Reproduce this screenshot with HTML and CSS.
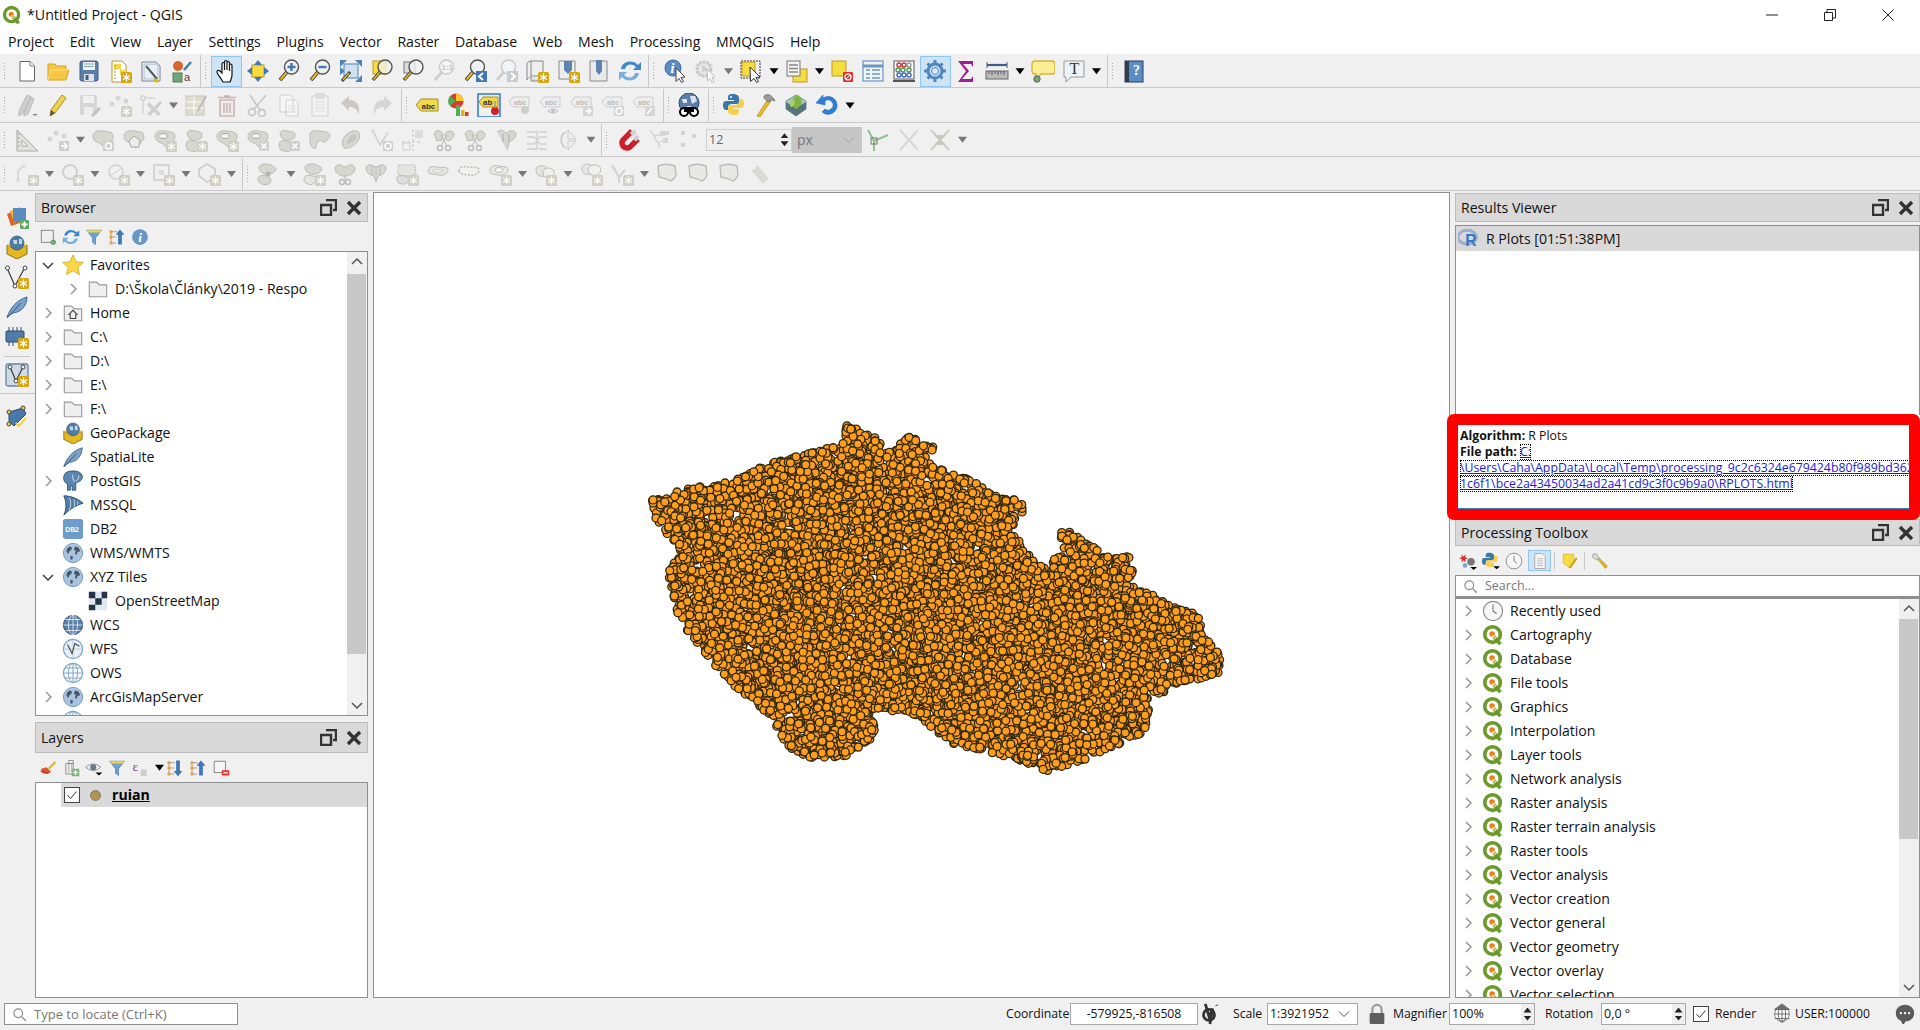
FILE: index.html
```html
<!DOCTYPE html>
<html lang="en">
<head>
<meta charset="utf-8">
<title>*Untitled Project - QGIS</title>
<link rel="stylesheet" href="styles.css">
</head>
<body>
<svg class="defs" width="0" height="0">
<defs>
<g id="st"><rect x="13" y="13" width="11" height="11" rx="1.5" fill="#d8a70f"/><path d="M18.5 14.5v8M15 16.5l7 4M22 16.5l-7 4" stroke="#fff" stroke-width="1.3"/></g>
<g id="gst"><rect x="13" y="13" width="11" height="11" rx="1.5" fill="#cfcfc4"/><path d="M18.5 14.5v8M15 16.5l7 4M22 16.5l-7 4" stroke="#fff" stroke-width="1.3"/></g>
<g id="gx"><rect x="13" y="13" width="10" height="10" rx="1.5" fill="#cfcfcf"/><path d="M15.5 15.5l5 5M20.5 15.5l-5 5" stroke="#fff" stroke-width="1.6"/></g>
<g id="lens"><path d="M10 13L3 21" stroke="#333" stroke-width="3.6"/><path d="M10 13L3.5 20.5" stroke="#eeba25" stroke-width="2"/><circle cx="14.5" cy="8" r="7" fill="#eef1f4" stroke="#555" stroke-width="1.4"/></g>
<g id="glens"><path d="M10 13L3 21" stroke="#cfcfcf" stroke-width="3"/><circle cx="14.5" cy="8" r="7" fill="#f4f4f4" stroke="#c8c8c8" stroke-width="1.4"/></g>
<path id="bl" d="M2 8c0-4 5-6 10-5s10 0 10 6c0 4-3 4-5 8s-4 3-6 0-9-2-9-9z"/>
</defs>
<symbol id="q" viewBox="0 0 24 24"><circle cx="11.5" cy="11.5" r="8.5" fill="#fff" stroke="#6a9a2c" stroke-width="4"/><path d="M13 14l7 8" stroke="#6a9a2c" stroke-width="4"/><circle cx="11" cy="11" r="3" fill="#ee7913"/><path d="M11 12l4 4" stroke="#f2d38a" stroke-width="2"/></symbol>
<symbol id="new" viewBox="0 0 24 24"><path d="M5 2.500h10l4.500 4.500v15H5z" fill="#fff" stroke="#666"/><path d="M15 2.500V7h4.500" fill="#eee" stroke="#888"/></symbol>
<symbol id="open" viewBox="0 0 24 24"><path d="M2 5h7l2 2h9v4h3l-3 10H2z" fill="#f5c644" stroke="#d6a725"/><path d="M2 21l3-10h18" fill="none" stroke="#fbe08f"/></symbol>
<symbol id="save" viewBox="0 0 24 24"><rect x="3" y="2" width="18" height="20" rx="2" fill="#5a7ea8" stroke="#3f5f85"/><rect x="6" y="3" width="12" height="8" fill="#f2f2f2"/><path d="M7 5h10M7 7.500h10" stroke="#8aa"/><rect x="7" y="15" width="10" height="7" fill="#dfe3e8"/><rect x="8.500" y="16" width="3" height="5" fill="#3f5f85"/></symbol>
<symbol id="saveas" viewBox="0 0 24 24"><path d="M4 2h10l4 4v17H4z" fill="#fff" stroke="#b9982c"/><path d="M6 5h7v6h4v5h-5V10H6z" fill="#f6d64a"/><path d="M7 6v14" stroke="#b9982c" stroke-dasharray="2 1"/><use href="#st"/></symbol>
<symbol id="layout" viewBox="0 0 24 24"><path d="M3 3h14l4 4v15H3z" fill="#fff" stroke="#6d7f93"/><rect x="5" y="5" width="14" height="15" fill="#e9eff5" stroke="#aeb9c5"/><path d="M7 7l11 13" stroke="#4b5a69" stroke-width="2"/><path d="M15 20l4 3" stroke="#e2b520" stroke-width="3"/></symbol>
<symbol id="style" viewBox="0 0 24 24"><circle cx="8" cy="7" r="5" fill="#d8662c"/><rect x="3" y="14" width="9" height="9" fill="#6fa67b" stroke="#4f8058"/><path d="M14 11L21 3" stroke="#4b7cae" stroke-width="2.600"/><text x="14" y="22" class="ic">a</text></symbol>
<symbol id="hand" viewBox="0 0 24 24"><path d="M8 23C6 19 2 15 2 13c0-2 2-2 3.500-.5L7 14V5c0-2 2.500-2 2.500 0v6V3c0-2 2.500-2 2.500 0v8V4c0-2 2.500-2 2.500 0v8V6.500c0-2 2.500-2 2.500 0V16c0 3-1 4-2 7z" fill="#fff" stroke="#111" stroke-width="1.2"/></symbol>
<symbol id="pan" viewBox="0 0 24 24"><rect x="6" y="6" width="12" height="12" fill="#f6dc3f" stroke="#b9982c"/><path d="M12 1l4 5H8zM12 23l4-5H8zM1 12l5-4v8zM23 12l-5-4v8z" fill="#3f78b5"/></symbol>
<symbol id="zin" viewBox="0 0 24 24"><use href="#lens"/><path d="M14.500 4v8M10.500 8h8" stroke="#3f78b5" stroke-width="2.400"/></symbol>
<symbol id="zout" viewBox="0 0 24 24"><use href="#lens"/><path d="M10.500 8h8" stroke="#3f78b5" stroke-width="2.400"/></symbol>
<symbol id="zfull" viewBox="0 0 24 24"><path d="M1 1h7L1 8zM23 1h-7l7 7zM23 23h-7l7-7zM1 16v-8l5 4z" fill="#4b83b8"/><rect x="5" y="5" width="14" height="14" fill="#cfe0ee" stroke="#4b83b8"/><path d="M11 13L3 22" stroke="#333" stroke-width="3"/><path d="M10 14L4 21" stroke="#eeba25" stroke-width="1.500"/></symbol>
<symbol id="zsel" viewBox="0 0 24 24"><rect x="3" y="2" width="13" height="13" fill="#f6dc3f" stroke="#b9982c"/><path d="M10 13L3 21" stroke="#333" stroke-width="3.400"/><path d="M10 13L3.500 20.500" stroke="#eeba25" stroke-width="1.800"/><circle cx="15" cy="8" r="7" fill="#f2f4ee" fill-opacity=".75" stroke="#555" stroke-width="1.400"/></symbol>
<symbol id="zlay" viewBox="0 0 24 24"><rect x="3" y="3" width="11" height="11" fill="#ddd" stroke="#777"/><path d="M10 13L3 21" stroke="#333" stroke-width="3.400"/><path d="M10 13L3.500 20.500" stroke="#eeba25" stroke-width="1.800"/><circle cx="15" cy="8" r="7" fill="#f2f4f2" fill-opacity=".75" stroke="#555" stroke-width="1.400"/></symbol>
<symbol id="z11" viewBox="0 0 24 24"><use href="#glens"/><text x="9.500" y="11" class="ig">1:1</text></symbol>
<symbol id="zlast" viewBox="0 0 24 24"><use href="#lens"/><rect x="13" y="12" width="11" height="11" fill="#3f78b5"/><path d="M20 14l-4 3.500 4 3.500" fill="none" stroke="#fff" stroke-width="2"/></symbol>
<symbol id="znext" viewBox="0 0 24 24"><use href="#glens"/><rect x="13" y="12" width="11" height="11" fill="#c7ccd1"/><path d="M17 14l4 3.500-4 3.500" fill="none" stroke="#fff" stroke-width="2"/></symbol>
<symbol id="mapn" viewBox="0 0 24 24"><path d="M6 2h12v15H6zM6 2C3 2 2 4 2 6v15c2-3 3-3 4-3" fill="#eee" stroke="#888"/><path d="M6 18v4h12" fill="#ddd" stroke="#888"/><use href="#st"/></symbol>
<symbol id="map3" viewBox="0 0 24 24"><path d="M3 2h16v18H3z" fill="#eee" stroke="#888"/><path d="M8 2h8v9l-4 4-4-4z" fill="#5b84b3"/><use href="#st"/></symbol>
<symbol id="bmk" viewBox="0 0 24 24"><path d="M3 2h17v20H3z" fill="#eaeaea" stroke="#888"/><path d="M9 1h6v11l-3 4-3-4z" fill="#5b84b3"/></symbol>
<symbol id="ref" viewBox="0 0 24 24"><path d="M3 10C4 2 15 0 20 6l3-3v8h-8l3-3C14 4 8 5 7 10z" fill="#3f88c9"/><path d="M21 14c-1 8-12 10-17 4l-3 3v-8h8l-3 3c4 4 10 3 11-2z" fill="#77afe0"/></symbol>
<symbol id="idn" viewBox="0 0 24 24"><circle cx="10" cy="9" r="8" fill="#5a8cc5" stroke="#3c6a9e"/><text x="7.500" y="14" class="ii">i</text><path d="M13 9l9 9-4 .5 2.500 4-2 1-2.500-4-3 3z" fill="#fff" stroke="#444"/></symbol>
<symbol id="act" viewBox="0 0 24 24"><circle cx="10" cy="10" r="7" fill="#e8e8e8" stroke="#c5c5c5" stroke-width="3" stroke-dasharray="2.500 1"/><path d="M8 6l6 4-6 4z" fill="#cfcfcf"/><path d="M13 10l8 8-3 .5 2 4-2 1-2-4-2.500 2.500z" fill="#fff" stroke="#bbb"/></symbol>
<symbol id="sel" viewBox="0 0 24 24"><rect x="2" y="2" width="19" height="17" fill="none" stroke="#333" stroke-dasharray="2 1"/><rect x="3" y="3" width="13" height="14" fill="#f6dc3f" stroke="#b9982c"/><path d="M11 8l10 10-4 .5 2.500 4-2 1-2.500-4-3.500 3z" fill="#fff" stroke="#333"/></symbol>
<symbol id="selby" viewBox="0 0 24 24"><rect x="8" y="10" width="14" height="13" fill="#f6dc3f" stroke="#b9982c"/><rect x="2" y="2" width="13" height="15" fill="#f2f2f2" stroke="#777"/><path d="M4 6h9M4 9.500h9M4 13h9" stroke="#888" stroke-width="1.600"/></symbol>
<symbol id="desel" viewBox="0 0 24 24"><rect x="2" y="2" width="14" height="15" fill="#f6dc3f" stroke="#b9982c"/><rect x="13" y="13" width="10" height="10" rx="1" fill="#e0352f"/><circle cx="18" cy="18" r="3" fill="none" stroke="#fff" stroke-width="1.200"/><path d="M16 20l4-4" stroke="#fff"/></symbol>
<symbol id="tbl" viewBox="0 0 24 24"><rect x="2" y="2" width="20" height="20" fill="#eef3f8" stroke="#6c96c0" stroke-width="1.200"/><path d="M2 7h20" stroke="#6c96c0" stroke-width="3"/><path d="M5 11h4M11 11h8M5 15h4M11 15h8M5 19h4M11 19h8" stroke="#6c96c0" stroke-width="1.300"/></symbol>
<symbol id="aba" viewBox="0 0 24 24"><rect x="2" y="2" width="20" height="18" fill="#fff" stroke="#555"/><path d="M1 22h22" stroke="#555" stroke-width="2"/><g fill="none" stroke-width="1.400"><circle cx="7" cy="6" r="2" stroke="#c33"/><circle cx="12" cy="6" r="2" stroke="#c33"/><circle cx="17" cy="6" r="2" stroke="#999"/><circle cx="6" cy="11" r="2" stroke="#4a9a4a"/><circle cx="11" cy="11" r="2" stroke="#4a9a4a"/><circle cx="17" cy="11" r="2" stroke="#4a9a4a"/><circle cx="7" cy="16" r="2" stroke="#46c"/><circle cx="12" cy="16" r="2" stroke="#46c"/><circle cx="17" cy="16" r="2" stroke="#46c"/></g></symbol>
<symbol id="gear" viewBox="0 0 24 24"><circle cx="12" cy="12" r="7" fill="none" stroke="#4f86c0" stroke-width="3"/><path d="M12 1v5M12 18v5M1 12h5M18 12h5M4.500 4.500l3.500 3.500M16 16l3.500 3.500M19.500 4.500L16 8M8 16l-3.500 3.500" stroke="#4f86c0" stroke-width="3"/><circle cx="12" cy="12" r="3.500" fill="#dbe9f6" stroke="#4f86c0"/></symbol>
<symbol id="sig" viewBox="0 0 24 24"><path d="M4 2h15v6l-2-3H9l6 7-7 8h9l2-3v6H4l8-11z" fill="#a01c95"/></symbol>
<symbol id="rul" viewBox="0 0 24 24"><path d="M2 6h20" stroke="#3f5f85" stroke-width="2.200"/><path d="M2 3v6M22 3v6" stroke="#3f5f85"/><rect x="1" y="12" width="22" height="8" fill="#bbb" stroke="#666"/><path d="M4 12v3M7 12v4M10 12v3M13 12v4M16 12v3M19 12v4" stroke="#555"/></symbol>
<symbol id="tip" viewBox="0 0 24 24"><path d="M4 2h17q3 0 3 3v7q0 3-3 3H10l-5 5v-5H4q-3 0-3-3V5q0-3 3-3z" fill="#fbee94" stroke="#d8b03e" stroke-width="1.400"/><circle cx="6" cy="20" r="3.200" fill="#79a56b" stroke="#567"/></symbol>
<symbol id="txt" viewBox="0 0 24 24"><path d="M2 2h20v16H9l-5 5v-5H2z" fill="#eef3f6" stroke="#999"/><text x="7.500" y="15" class="it">T</text></symbol>
<symbol id="hlp" viewBox="0 0 24 24"><rect x="4" y="2" width="18" height="21" fill="#5c8dc2" stroke="#2c3e50"/><rect x="4" y="2" width="4" height="21" fill="#2c3e50"/><text x="12" y="16" class="iq">?</text></symbol>
<symbol id="gpens" viewBox="0 0 24 24"><path d="M4 18L12 2l4 2-8 16-4 3zM9 20L16 4l3 2-6 15-4 2z" fill="#cfcfcf" stroke="#b9b9b9"/><path d="M17 21h6l-3 2z" fill="#888"/></symbol>
<symbol id="pen" viewBox="0 0 24 24"><path d="M16 2l4 3L9 20l-5 3 1-6z" fill="#f3d14a" stroke="#a58f26"/><path d="M4 23l1-6 4 3z" fill="#555"/></symbol>
<symbol id="gsave" viewBox="0 0 24 24"><rect x="3" y="2" width="17" height="20" rx="2" fill="#d6d6d6"/><rect x="6" y="3" width="11" height="7" fill="#f1f1f1"/><rect x="7" y="14" width="9" height="8" fill="#eee"/><path d="M14 22l8-8 2 2-8 8z" fill="#c0c0c0"/></symbol>
<symbol id="gpts" viewBox="0 0 24 24"><g fill="#d5d5d5"><circle cx="4" cy="11" r="2.500"/><circle cx="10" cy="5" r="2.500"/><circle cx="18" cy="8" r="2.500"/></g><use href="#gst"/></symbol>
<symbol id="gmod" viewBox="0 0 24 24"><rect x="2" y="3" width="4" height="4" fill="none" stroke="#c8c8c8"/><path d="M6 5h10M4 7v14" stroke="#c8c8c8"/><path d="M8 21L21 8l2 2-12 13zM10 9l12 12-3 2L8 12z" fill="#cfcfcf"/></symbol>
<symbol id="gedit" viewBox="0 0 24 24"><rect x="2" y="3" width="18" height="19" fill="#ddddcf" stroke="#c8c8b8"/><path d="M2 9h18M2 15h18M10 3v19" stroke="#fff"/><path d="M13 17L21 2l2 2-9 15z" fill="#bfbfbf"/></symbol>
<symbol id="gtrash" viewBox="0 0 24 24"><path d="M5 7h14v16H5z" fill="#f2eded" stroke="#c9b5b5" stroke-width="1.600"/><path d="M3 4.500h18M9 3h6M9 10v10M12 10v10M15 10v10" stroke="#c9b5b5" stroke-width="1.600"/></symbol>
<symbol id="gcut" viewBox="0 0 24 24"><circle cx="6" cy="19" r="3.500" fill="none" stroke="#c8c8c8" stroke-width="1.800"/><circle cx="16" cy="20" r="3.500" fill="none" stroke="#c8c8c8" stroke-width="1.800"/><path d="M8 16L20 2M14 17L4 2" stroke="#c8c8c8" stroke-width="1.600"/></symbol>
<symbol id="gcopy" viewBox="0 0 24 24"><path d="M3 2h10l3 3v14H3zM9 7h9l3 3v13H9z" fill="#f6f6f6" stroke="#cfcfcf"/><path d="M11 13h8M11 16h8M11 19h8" stroke="#ddd"/></symbol>
<symbol id="gpaste" viewBox="0 0 24 24"><rect x="4" y="3" width="16" height="20" fill="#f2f2f2" stroke="#cfcfcf"/><rect x="8" y="1" width="8" height="4" fill="#ddd" stroke="#cfcfcf"/><path d="M7 9h10M7 12h10M7 15h10M7 18h10" stroke="#ddd"/></symbol>
<symbol id="gund" viewBox="0 0 24 24"><path d="M2 10l8-7v4c8 0 11 5 10 15-2-6-4-8-10-8v4z" fill="#cdc8c3"/></symbol>
<symbol id="gred" viewBox="0 0 24 24"><path d="M22 10l-8-7v4C6 7 3 12 4 22c2-6 4-8 10-8v4z" fill="#d5d5d5"/></symbol>
<symbol id="labc" viewBox="0 0 24 24"><path d="M1 12l5-6h17v12H6z" fill="#f2d94b" stroke="#a58f26"/><text x="6.500" y="15.500" class="il">abc</text></symbol>
<symbol id="chart" viewBox="0 0 24 24"><circle cx="10" cy="8" r="7.500" fill="#d93a32"/><path d="M10 8V.500A7.500 7.500 0 0 1 17.500 8z" fill="#f6c92e"/><path d="M10 8l-6 5A7.500 7.500 0 0 1 4 3z" fill="#4caf50"/><rect x="10" y="12" width="4" height="11" fill="#4caf50"/><rect x="15" y="17" width="3.500" height="6" fill="#e3af16"/><rect x="19" y="19" width="3.500" height="4" fill="#d93a32"/></symbol>
<symbol id="labp" viewBox="0 0 24 24"><rect x="1" y="1" width="22" height="23" fill="none" stroke="#1f6fd1" stroke-width="1.400"/><path d="M2 9l4-5h15v10H6z" fill="#f2d94b" stroke="#a58f26"/><text x="6" y="12" class="il">ab</text><circle cx="18" cy="18" r="4" fill="#c8242c"/><path d="M18 8v7" stroke="#999" stroke-width="1.500"/></symbol>
<symbol id="gl1" viewBox="0 0 24 24"><path d="M1 9l4-5h16v10H5z" fill="#eee" stroke="#ccc"/><text x="6" y="12" class="ig2">abc</text><circle cx="17" cy="17" r="4" fill="#cfcfcf"/></symbol>
<symbol id="gl2" viewBox="0 0 24 24"><path d="M1 9l4-5h16v10H5z" fill="#eee" stroke="#ccc"/><text x="6" y="12" class="ig2">abc</text><path d="M9 18q5-4 10 0-5 4-10 0z" fill="none" stroke="#bbb"/><circle cx="14" cy="18" r="1.800" fill="#bbb"/></symbol>
<symbol id="gl3" viewBox="0 0 24 24"><path d="M1 9l4-5h16v10H5z" fill="#eee" stroke="#ccc"/><text x="6" y="12" class="ig2">abc</text><rect x="13" y="13" width="10" height="10" fill="#d5d5d5"/><path d="M15 18h6M18 15l3 3-3 3" stroke="#fff" fill="none" stroke-width="1.500"/></symbol>
<symbol id="gl4" viewBox="0 0 24 24"><path d="M1 9l4-5h16v10H5z" fill="#eee" stroke="#ccc"/><text x="6" y="12" class="ig2">abc</text><rect x="13" y="13" width="10" height="10" fill="#d5d5d5"/><circle cx="18" cy="18" r="3" fill="none" stroke="#fff" stroke-width="1.500"/></symbol>
<symbol id="gl5" viewBox="0 0 24 24"><path d="M1 9l4-5h16v10H5z" fill="#eee" stroke="#ccc"/><text x="6" y="12" class="ig2">abc</text><rect x="13" y="13" width="10" height="10" fill="#d5d5d5"/><path d="M15 21l5-6" stroke="#fff" stroke-width="1.500"/></symbol>
<symbol id="earth" viewBox="0 0 24 24"><circle cx="12" cy="10" r="10" fill="#5a7fa8" stroke="#2e4a68"/><path d="M5 6h5v4H6zM13 3h5l2 5-5 3zM10 13h4v5h-3z" fill="#dbe5ef"/><circle cx="7" cy="19" r="4" fill="#fff" stroke="#000" stroke-width="2"/><circle cx="17" cy="19" r="4" fill="#fff" stroke="#000" stroke-width="2"/><path d="M7 14h10v5H7z" fill="#000"/></symbol>
<symbol id="py" viewBox="0 0 24 24"><path d="M11 1c-5 0-5 2-5 4v2h6v1H4c-3 0-3 3-3 5s1 4 3 4h2v-3c0-2 2-3 4-3h5c1 0 2-1 2-2V5c0-2-2-4-6-4z" fill="#3b78aa"/><path d="M12 22c5 0 5-2 5-4v-2h-6v-1h8c3 0 3-3 3-5s-1-4-3-4h-2v3c0 2-2 3-4 3H8c-1 0-2 1-2 2v4c0 2 2 4 6 4z" fill="#f6d04d"/><circle cx="9" cy="4" r="1" fill="#fff"/></symbol>
<symbol id="ham" viewBox="0 0 24 24"><path d="M4 23l11-17 3 2L7 24z" fill="#e9b923" stroke="#a38319" stroke-width=".600"/><path d="M11 3c4-3 8-1 11 5l-3-1-4 2-4-4z" fill="#9a9a9a" stroke="#555" stroke-width=".600"/></symbol>
<symbol id="plg" viewBox="0 0 24 24"><path d="M12 2l10 6v8l-10 7-10-7V8z" fill="#a8c7c7" stroke="#78989b"/><path d="M12 15L2 9v7l10 7 10-7V9z" fill="#56747a"/><path d="M12 16C5 12 5 7 14 2c5 5 5 10-2 14z" fill="#7cb342"/><path d="M7 14C4 10 6 7 10 6c1 4 1 7-3 8z" fill="#a8d06a"/></symbol>
<symbol id="undb" viewBox="0 0 24 24"><path d="M8 5a9 9 0 1 1-1 14l3-3a5 5 0 1 0 0-8v4L1 10l7-8z" fill="#2d7fd3" stroke="#1c63ad" stroke-width=".500"/></symbol>
<symbol id="grul" viewBox="0 0 24 24"><path d="M2 2v21h21z" fill="#e2e2da" stroke="#aaa"/><path d="M7 12v6h6z" fill="#efefef" stroke="#aaa"/><path d="M2 6h3M2 10h3M2 14h3M2 18h3" stroke="#aaa"/></symbol>
<symbol id="gpt2" viewBox="0 0 24 24"><g fill="#d5d5d5"><circle cx="4" cy="11" r="2.500"/><circle cx="10" cy="5" r="2.500"/><circle cx="18" cy="8" r="2.500"/></g><rect x="13" y="13" width="10" height="10" fill="#cfcfcf"/><path d="M15 18h6M18 15l3 3-3 3" stroke="#fff" fill="none" stroke-width="1.500"/></symbol>
<symbol id="gb" viewBox="0 0 24 24"><use href="#bl" fill="#d7d7d2" stroke="#bcbcb6"/></symbol>
<symbol id="gbr" viewBox="0 0 24 24"><use href="#bl" fill="#d7d7d2" stroke="#bcbcb6"/><rect x="12" y="13" width="11" height="10" fill="#cfcfcf"/><circle cx="17.500" cy="18" r="3" fill="none" stroke="#fff" stroke-width="1.500"/></symbol>
<symbol id="ghex" viewBox="0 0 24 24"><use href="#bl" fill="#d7d7d2" stroke="#bcbcb6"/><path d="M12 8l6 4-1 7H9l-2-6z" fill="#ececec" stroke="#aaa"/></symbol>
<symbol id="gring" viewBox="0 0 24 24"><use href="#bl" fill="#d7d7d2" stroke="#bcbcb6"/><ellipse cx="10" cy="8" rx="4.500" ry="2.500" fill="#f0f0f0" stroke="#aaa"/><use href="#gst"/></symbol>
<symbol id="gtw" viewBox="0 0 24 24"><path d="M3 6c0-4 5-4 8-3s7 0 7 4-3 4-5 5-8 1-10-6zM2 17c0-5 5-5 8-4s8 4 5 8-5 2-8 2-5-2-5-6z" fill="#d7d7d2" stroke="#bcbcb6"/><use href="#gst"/></symbol>
<symbol id="grx" viewBox="0 0 24 24"><use href="#bl" fill="#d7d7d2" stroke="#bcbcb6"/><ellipse cx="10" cy="8" rx="4.500" ry="2.500" fill="#f0f0f0" stroke="#aaa"/><use href="#gx"/></symbol>
<symbol id="gtx" viewBox="0 0 24 24"><path d="M3 6c0-4 5-4 8-3s7 0 7 4-3 4-5 5-8 1-10-6zM2 17c0-5 5-5 8-4s8 4 5 8-5 2-8 2-5-2-5-6z" fill="#d7d7d2" stroke="#bcbcb6"/><use href="#gx"/></symbol>
<symbol id="gb2" viewBox="0 0 24 24"><path d="M2 6c0-3 6-4 10-3s10 0 10 5c0 3-3 3-4 5s-2 2-4 0-6 2-6 6c0 2-3 2-4 0-3-4-2-9-2-13z" fill="#d7d7d2" stroke="#bcbcb6"/></symbol>
<symbol id="goff" viewBox="0 0 24 24"><path d="M4 18C1 12 8 4 14 3c6-1 8 3 6 8s-7 8-11 9-4 0-5-2z" fill="#d7d7d2" stroke="#bcbcb6"/><path d="M8 15c-1-3 3-7 6-8 4-1 4 3 2 5s-7 5-8 3z" fill="#c5c5c0"/></symbol>
<symbol id="gvr" viewBox="0 0 24 24"><path d="M3 3l7 14 7-11" fill="none" stroke="#cfcfcf" stroke-width="1.500"/><circle cx="3" cy="3" r="2" fill="#ddd"/><circle cx="17" cy="6" r="2" fill="#ddd"/><rect x="13" y="13" width="10" height="10" fill="#cfcfcf"/><circle cx="18" cy="18" r="3" fill="none" stroke="#fff" stroke-width="1.500"/></symbol>
<symbol id="gsp" viewBox="0 0 24 24"><path d="M12 1v22M1 14h20" stroke="#cfcfcf" stroke-dasharray="3 2" stroke-width="1.500"/><rect x="14" y="2" width="8" height="8" fill="#ddd"/><rect x="2" y="15" width="7" height="7" fill="none" stroke="#cfcfcf"/></symbol>
<symbol id="gsc" viewBox="0 0 24 24"><path d="M2 6c2-5 7-4 9 0l-1 6-5 1zM13 6c2-4 8-4 9 0 0 4-3 6-6 7l-3-3z" fill="#d7d7d2" stroke="#bcbcb6"/><circle cx="8" cy="20" r="2.500" fill="none" stroke="#bbb" stroke-width="1.500"/><circle cx="16" cy="20" r="2.500" fill="none" stroke="#bbb" stroke-width="1.500"/><path d="M9 18l6-11M15 18L9 7" stroke="#bbb"/></symbol>
<symbol id="gsl" viewBox="0 0 24 24"><path d="M3 4c3-3 7-2 8 1l2 0c2-3 7-3 9 0 0 5-3 7-7 9l-2 8" fill="#d7d7d2" stroke="#bcbcb6"/><path d="M9 6v8M15 6v8" stroke="#aaa"/></symbol>
<symbol id="gcr" viewBox="0 0 24 24"><path d="M2 4h10M14 4h8M2 9h7l3 3 3-3h7M2 16h7l3-3 3 3h7M2 21h10M14 21h8M12 2v20" stroke="#cfcfcf" stroke-width="1.300" fill="none"/></symbol>
<symbol id="grot" viewBox="0 0 24 24"><path d="M12 2l8 9-8 0zM12 22l8-9h-8z" fill="#eee" stroke="#c8c8c8"/><path d="M10 4a9 9 0 0 0 0 16" fill="none" stroke="#c8c8c8" stroke-width="1.500"/></symbol>
<symbol id="mag" viewBox="0 0 24 24"><path d="M16 3L7 12a5 5 0 0 0 7 7l8-8" fill="none" stroke="#cc1f29" stroke-width="5.500"/><path d="M16 3l2.500 3.500M22 11l-3.500-2" stroke="#d0d0d0" stroke-width="5.500"/></symbol>
<symbol id="gsn" viewBox="0 0 24 24"><g fill="none" stroke="#d0d0d0" stroke-width="1.300"><path d="M3 2l4 6 4 7 2 5M7 8l8-2M11 15l7-3"/></g><g fill="#d5d5d5"><rect x="13" y="3" width="5" height="5"/><rect x="18" y="3" width="4" height="4"/><rect x="16" y="10" width="5" height="5"/></g></symbol>
<symbol id="gsn2" viewBox="0 0 24 24"><g fill="#d5d5d5"><rect x="3" y="3" width="4" height="4"/><rect x="14" y="6" width="4" height="4"/><rect x="3" y="15" width="4" height="4"/></g></symbol>
<symbol id="trim" viewBox="0 0 24 24"><path d="M8 13L2 2M8 13l14-6M8 13v10" stroke="#8cc68c" stroke-width="2"/><rect x="5" y="10" width="6" height="6" fill="none" stroke="#777"/></symbol>
<symbol id="gcross" viewBox="0 0 24 24"><path d="M3 2l18 20M21 2L3 22" stroke="#d8d8d8" stroke-width="2"/></symbol>
<symbol id="gcross2" viewBox="0 0 24 24"><path d="M3 2l18 20M21 2L3 22" stroke="#cfcfc6" stroke-width="2"/><path d="M6 7l12 0-5 5 5 5H6l5-5z" fill="#c8c8be"/></symbol>
<symbol id="gv1" viewBox="0 0 24 24"><path d="M3 18V9l6-6" fill="none" stroke="#d0d0d0" stroke-width="1.500"/><circle cx="3" cy="18" r="2" fill="#ddd"/><circle cx="9" cy="4" r="2" fill="#ddd"/><use href="#gst"/></symbol>
<symbol id="gv2" viewBox="0 0 24 24"><circle cx="10" cy="10" r="7" fill="none" stroke="#d0d0d0" stroke-width="2"/><use href="#gst"/></symbol>
<symbol id="gv3" viewBox="0 0 24 24"><circle cx="10" cy="10" r="7" fill="none" stroke="#d0d0d0" stroke-width="1.400"/><path d="M4 14l12-8" stroke="#d0d0d0"/><use href="#gst"/></symbol>
<symbol id="gv4" viewBox="0 0 24 24"><rect x="3" y="3" width="15" height="15" fill="none" stroke="#cfcfcf" stroke-width="1.600"/><rect x="8" y="8" width="5" height="5" fill="#ddd"/><use href="#gst"/></symbol>
<symbol id="gv5" viewBox="0 0 24 24"><path d="M10 2l8 5v9l-8 4-8-6V7z" fill="none" stroke="#cfcfcf" stroke-width="1.800"/><use href="#gst"/></symbol>
<symbol id="gm1" viewBox="0 0 24 24"><path d="M3 5c1-3 8-4 12-2s6 3 4 6-4 2-6 3-10 0-10-7z" fill="#d7d7d2" stroke="#bcbcb6"/><path d="M2 17c0-4 5-4 9-3s5 5 3 7-6 2-8 1-4-2-4-5z" fill="#d7d7d2" stroke="#bcbcb6"/><circle cx="12" cy="12" r="2.500" fill="#b5b5b0"/></symbol>
<symbol id="gm2" viewBox="0 0 24 24"><path d="M3 5c1-3 8-4 12-2s6 3 4 6-4 2-6 3-10 0-10-7z" fill="#d7d7d2" stroke="#bcbcb6"/><path d="M2 17c0-4 5-4 9-3s3 5 1 7-3 2-6 1-4-2-4-5z" fill="#e4e4e0" stroke="#bcbcb6"/><use href="#gst"/></symbol>
<symbol id="gm3" viewBox="0 0 24 24"><path d="M2 6c1-4 6-4 9-1h2c3-3 8-3 9 1 0 5-4 7-8 8h-4C6 13 2 11 2 6z" fill="#d7d7d2" stroke="#bcbcb6"/><path d="M12 13v8" stroke="#bbb"/><circle cx="9" cy="20" r="2.500" fill="none" stroke="#bbb" stroke-width="1.400"/><circle cx="15" cy="20" r="2.500" fill="none" stroke="#bbb" stroke-width="1.400"/></symbol>
<symbol id="gm4" viewBox="0 0 24 24"><path d="M2 6c1-4 6-4 9-1h2c3-3 8-3 9 1 0 5-4 7-8 8l-2 6-2-6C6 13 2 11 2 6z" fill="#d7d7d2" stroke="#bcbcb6"/><path d="M8 4v9M12 4v9M16 4v9" stroke="#bbb"/></symbol>
<symbol id="gm5" viewBox="0 0 24 24"><path d="M3 3h17l1 9-8 2-10-1z" fill="#e4e4e0" stroke="#bcbcb6" stroke-dasharray="2 1"/><path d="M2 15c3-2 9-2 11 1s-1 6-4 6-8 0-7-7z" fill="#ddd" stroke="#bcbcb6"/><use href="#gst"/></symbol>
<symbol id="gm6" viewBox="0 0 24 24"><path d="M2 9c0-4 5-5 9-4s11-1 11 3-6 6-10 5-10 0-10-4z" fill="#e4e4e0" stroke="#bcbcb6"/><path d="M6 9c2-2 4-1 8-1s4 1 2 2-8 1-10-1z" fill="#f1f1f1" stroke="#ccc"/></symbol>
<symbol id="gm7" viewBox="0 0 24 24"><path d="M2 9c0-4 5-5 9-4s11-1 11 3-6 6-10 5-10 0-10-4z" fill="none" stroke="#bcbcb6" stroke-dasharray="2 1.500" stroke-width="1.500"/></symbol>
<symbol id="gm8" viewBox="0 0 24 24"><path d="M2 8c0-4 5-5 9-4s9 0 9 4-6 6-10 5-8 0-8-5z" fill="#e8e8e4" stroke="#bcbcb6"/><ellipse cx="11" cy="8" rx="4" ry="2.500" fill="#f8f8f8" stroke="#bbb"/><use href="#gst"/></symbol>
<symbol id="gm9" viewBox="0 0 24 24"><path d="M3 8c0-5 8-5 10-3s5 8 0 9-10 0-10-6z" fill="#e4e4e0" stroke="#bcbcb6"/><path d="M10 10c0-4 6-5 9-3s3 7-1 8-8 1-8-5z" fill="#f0f0ee" stroke="#bcbcb6"/><use href="#gst"/></symbol>
<symbol id="gm10" viewBox="0 0 24 24"><path d="M3 6c0-4 6-5 9-3s3 8-1 9-8 0-8-6z" fill="#e4e8ea" stroke="#bcbcb6"/><path d="M9 7c0-4 8-5 11-3s2 8-2 9-9 0-9-6z" fill="#f0f0ee" stroke="#bcbcb6"/><use href="#gst"/></symbol>
<symbol id="gm11" viewBox="0 0 24 24"><path d="M2 3l7 12 6-7M9 15v6" fill="none" stroke="#d0d0d0" stroke-width="2"/><use href="#gst"/></symbol>
<symbol id="gc1" viewBox="0 0 24 24"><path d="M3 4c5-2 12-2 17 0l1 9c-1 3-3 5-5 6-5-3-8-3-12-4z" fill="#e8e8e4" stroke="#bcbcb6" stroke-width="1.400"/></symbol>
<symbol id="gmv" viewBox="0 0 24 24"><path d="M10 3l11 14-6 5L4 9z" fill="#d8d8d0"/><path d="M7 6l11 14M10 4l11 14" stroke="#efefef" stroke-dasharray="2 2"/></symbol>
<symbol id="f" viewBox="0 0 24 24"><path d="M2.500 4.500h8l3 3h8v13h-19z" fill="#efefef" stroke="#9a9a9a" stroke-width="1.200"/></symbol>
<symbol id="fh" viewBox="0 0 24 24"><path d="M2.500 4.500h8l3 3h8v13h-19z" fill="#efefef" stroke="#9a9a9a" stroke-width="1.200"/><path d="M7 14l5-5 5 5M9 13v5h6v-5" fill="none" stroke="#444" stroke-width="1.200"/></symbol>
<symbol id="star" viewBox="0 0 24 24"><path d="M12 1l3.300 7.500 8 .7-6 5.300 1.800 8L12 18.300 4.900 22.500l1.800-8-6-5.300 8-.7z" fill="#f8d84a" stroke="#d8b024"/></symbol>
<symbol id="gpk" viewBox="0 0 24 24"><path d="M2 10l10 5 10-5v9l-10 5-10-5z" fill="#e6b820" stroke="#8a7120"/><path d="M2 10l10-5 10 5-10 5z" fill="#f2d04c"/><circle cx="12" cy="8" r="7" fill="#4d7da8" stroke="#2e4a68" stroke-width=".600"/><path d="M8 5h4v4H9zM14 4h3v5h-3z" fill="#c6d6e3"/></symbol>
<symbol id="sl" viewBox="0 0 24 24"><path d="M2 22C6 12 12 5 22 2c0 8-5 15-14 16z" fill="#7da1c7" stroke="#3f6a96"/><path d="M2 23L16 8" stroke="#2f5a86"/></symbol>
<symbol id="pg" viewBox="0 0 24 24"><path d="M4 3c5-3 16-3 18 3 1 5-3 7-5 7l-2 2v7h-4v-5H9v5H6v-7C2 14 0 8 4 3z" fill="#5b86b2" stroke="#2e5478"/><path d="M12 5c-1 3 0 6 2 8M18 6c1 2 0 5-3 6" stroke="#dfe9f2" fill="none"/></symbol>
<symbol id="ms" viewBox="0 0 24 24"><path d="M2 2c6 0 14 2 21 8-6 2-13 5-21 13 3-7 3-14 0-21z" fill="#4f7ea8" stroke="#2c506f"/><path d="M8 4c2 4 2 9 0 14M13 6c1 3 1 5 0 9M17 8c.500 1 .500 2 0 4" stroke="#cfdde8" fill="none"/></symbol>
<symbol id="db2" viewBox="0 0 24 24"><rect x="1" y="1" width="22" height="22" rx="3" fill="#6d9bcc"/><text x="3.500" y="15" class="id">DB2</text></symbol>
<symbol id="globe" viewBox="0 0 24 24"><circle cx="12" cy="12" r="10.500" fill="#a9c4df" stroke="#6f93b8"/><path d="M5 8l3-3 3 1-1 3-2 1-1 3-2-2zM14 5l4 1 2 4-3 1-1 3-2-1 1-3-2-2zM9 15l3 1-1 4-2-2z" fill="#46586a"/></symbol>
<symbol id="wcs" viewBox="0 0 24 24"><circle cx="12" cy="12" r="10.500" fill="#5a7fa8" stroke="#2e4a68"/><path d="M1.500 12h21M4 6h16M4 18h16M12 1.500v21" stroke="#dbe5ef"/><ellipse cx="12" cy="12" rx="5" ry="10.500" fill="none" stroke="#dbe5ef"/></symbol>
<symbol id="wfs" viewBox="0 0 24 24"><circle cx="12" cy="12" r="10.500" fill="#e6eff7" stroke="#7ba0c5" stroke-width="1.300"/><path d="M2 12h20M12 2v20" stroke="#b8cee3"/><path d="M6 7l5 10 3-11 5 3" fill="none" stroke="#444" stroke-width="1.200"/></symbol>
<symbol id="ows" viewBox="0 0 24 24"><circle cx="12" cy="12" r="10.500" fill="#fafcfe" stroke="#7ba0c5" stroke-width="1.300"/><path d="M1.500 12h21M3.500 6.500h17M3.500 17.500h17M12 1.500v21" stroke="#7ba0c5"/><ellipse cx="12" cy="12" rx="5" ry="10.500" fill="none" stroke="#7ba0c5"/></symbol>
<symbol id="osm" viewBox="0 0 24 24"><rect x="2" y="2" width="20" height="20" fill="#dfe7ef"/><path d="M2 2h7v7H2zM16 2h6v7h-6zM9 9h7v7H9zM2 16h7v6H2z" fill="#243448"/></symbol>
<symbol id="clock" viewBox="0 0 24 24"><circle cx="12" cy="12" r="10.500" fill="#f6f6f6" stroke="#888" stroke-width="1.200"/><path d="M12 5v7l4 3" fill="none" stroke="#777" stroke-width="1.200"/></symbol>
<symbol id="lpt" viewBox="0 0 24 24"><rect x="3" y="3" width="16" height="16" fill="none" stroke="#666"/><circle cx="19" cy="19" r="3" fill="#7cb37c" stroke="#4a804a"/></symbol>
<symbol id="fun" viewBox="0 0 24 24"><path d="M2 3h20l-8 10v9l-4-3v-6z" fill="#6ea2cf" stroke="#4f80ad"/><path d="M2 3h20l-2 3H4z" fill="#f2d34a"/></symbol>
<symbol id="tup" viewBox="0 0 24 24"><path d="M4 5h8M4 5v15M4 12h7M4 20h7" stroke="#888" fill="none"/><rect x="2" y="3" width="4" height="4" fill="#eea23b"/><rect x="2" y="10" width="4" height="4" fill="#eea23b"/><rect x="2" y="18" width="4" height="4" fill="#eea23b"/><path d="M16 2l6 7h-3.500v13h-5V9H10z" fill="#3f78b5"/></symbol>
<symbol id="tdn" viewBox="0 0 24 24"><path d="M4 5h8M4 5v15M4 12h7M4 20h7" stroke="#888" fill="none"/><rect x="2" y="3" width="4" height="4" fill="#eea23b"/><rect x="2" y="10" width="4" height="4" fill="#eea23b"/><rect x="2" y="18" width="4" height="4" fill="#eea23b"/><path d="M16 23l6-7h-3.500V2h-5v14H10z" fill="#3f78b5"/></symbol>
<symbol id="inf" viewBox="0 0 24 24"><circle cx="12" cy="12" r="10.500" fill="#6795c8"/><text x="9.500" y="18" class="ii2">i</text></symbol>
<symbol id="brush" viewBox="0 0 24 24"><path d="M3 13l7-2 6 6-4 3-8-1z" fill="#d9532c"/><path d="M12 12l9-9 2 2-9 9z" fill="#e2b520"/><path d="M2 16l10 3" stroke="#b0391a" stroke-width="1.500"/></symbol>
<symbol id="addg" viewBox="0 0 24 24"><path d="M5 6h10v14H5zM9 2h6v4H9z" fill="#eee" stroke="#777"/><path d="M9 6v12M13 6v12" stroke="#999"/><rect x="13" y="13" width="10" height="10" fill="#7cb37c"/><path d="M18 15v6M15 18h6" stroke="#fff" stroke-width="2"/></symbol>
<symbol id="eye" viewBox="0 0 24 24"><path d="M1 11q10-9 20 0-10 9-20 0z" fill="#eef" stroke="#777"/><circle cx="11" cy="11" r="4" fill="#66788c"/><path d="M14 18h9l-4.500 4z" fill="#000"/></symbol>
<symbol id="eps" viewBox="0 0 24 24"><text x="2" y="16" class="ie">ε</text><rect x="13" y="14" width="8" height="9" fill="#cfcfcf"/></symbol>
<symbol id="rem" viewBox="0 0 24 24"><path d="M3 3h15v15H3z" fill="#f6f6f6" stroke="#666"/><rect x="13" y="15" width="10" height="7" rx="1" fill="#e0352f"/><path d="M15 18.500h6" stroke="#fff" stroke-width="1.600"/></symbol>
<symbol id="rl" viewBox="0 0 24 24"><ellipse cx="10" cy="10" rx="10" ry="7.500" fill="none" stroke="#9caecb" stroke-width="3.200"/><text x="8" y="20" class="ir">R</text></symbol>
<symbol id="pa1" viewBox="0 0 24 24"><path d="M3 3l3 3 3-3-1 4 4 1-4 2 1 4-3-3-3 3 1-4-4-2 4-1z" fill="#d32f2f"/><circle cx="16" cy="13" r="5" fill="#777"/><path d="M15 20h9l-4.500 4z" fill="#000"/><circle cx="8" cy="18" r="3" fill="#7aa3cc"/></symbol>
<symbol id="pa2" viewBox="0 0 24 24"><path d="M10 1c-5 0-5 2-5 4v2h6v1H3c-3 0-3 3-3 5s1 4 3 4h2v-3c0-2 2-3 4-3h5c1 0 2-1 2-2V5c0-2-2-4-6-4z" fill="#3b78aa"/><path d="M11 20c5 0 5-2 5-4v-2h-6v-1h8c3 0 3-3 3-5s-1-3-3-3h-2v3c0 2-2 3-4 3H7c-1 0-2 1-2 2v4c0 2 2 3 6 3z" fill="#f6d04d"/><path d="M15 19h9l-4.500 4z" fill="#000"/></symbol>
<symbol id="doc" viewBox="0 0 24 24"><path d="M5 2h10l4 4v16H5z" fill="#f4f4f4" stroke="#999"/><path d="M8 9h8M8 12h8M8 15h8M8 18h8" stroke="#aaa"/></symbol>
<symbol id="yed" viewBox="0 0 24 24"><path d="M3 3h14v12l-5 6-9-6z" fill="#f6dc3f" stroke="#d8b024"/><path d="M10 21l10-14 2 2-9 13z" fill="#c9a520"/></symbol>
<symbol id="wr" viewBox="0 0 24 24"><path d="M3 3c3-2 6 0 6 3l2 2-3 3-2-2C3 9 1 6 3 3z" fill="#ddd" stroke="#888"/><path d="M9 10l2-2 11 11-3 3z" fill="#e2b520" stroke="#987a14" stroke-width=".600"/></symbol>
<symbol id="lyr" viewBox="0 0 24 24"><path d="M2 9l9-4 4 13-9 3z" fill="#d8662c"/><path d="M5 6l10-4 4 12-10 4z" fill="#ecb53c"/><path d="M8 3h13v14H8z" fill="#5b8abf"/><rect x="15" y="15" width="9" height="9" rx="1" fill="#5fa75f"/><path d="M19.500 16.500v6M16.500 19.500h6" stroke="#fff" stroke-width="1.800"/></symbol>
<symbol id="lv" viewBox="0 0 24 24"><path d="M2 3l8 18 10-19" fill="none" stroke="#444" stroke-width="1.300"/><circle cx="2.500" cy="3" r="2" fill="#fff" stroke="#444"/><circle cx="20" cy="3" r="2" fill="#fff" stroke="#444"/><circle cx="10" cy="21" r="2" fill="#fff" stroke="#444"/><use href="#st"/></symbol>
<symbol id="lraw" viewBox="0 0 24 24"><rect x="1" y="6" width="18" height="11" rx="1" fill="#4d7da8" stroke="#2e4a68"/><path d="M4 2v4M8 2v4M12 2v4M16 2v4M4 17v4M8 17v4" stroke="#2e4a68"/><use href="#st"/></symbol>
<symbol id="lmesh" viewBox="0 0 24 24"><rect x="1" y="1" width="22" height="22" rx="2" fill="#cfdbe6" stroke="#5f86ab" stroke-width="1.300"/><path d="M5 4l6 14 7-14" fill="none" stroke="#444" stroke-width="1.300"/><circle cx="5" cy="4" r="2" fill="#fff" stroke="#444"/><circle cx="18" cy="4" r="2" fill="#fff" stroke="#444"/><circle cx="11" cy="18" r="2" fill="#fff" stroke="#444"/><use href="#st"/></symbol>
<symbol id="ltop" viewBox="0 0 24 24"><path d="M4 8L18 4l3 6-12 12-5-5z" fill="#4a78a8" stroke="#2e4a68"/><g fill="#f4d03f" stroke="#444"><circle cx="18" cy="4" r="2"/><circle cx="4" cy="8" r="2"/><circle cx="4" cy="20" r="2"/></g><path d="M11 19l3 3 7-8" fill="none" stroke="#f2d34a" stroke-width="2.200"/></symbol>
<symbol id="cog" viewBox="0 0 24 24"><path d="M8 1l4 14 4-9-3 17" fill="none" stroke="#333" stroke-width="3"/><circle cx="12" cy="13" r="6" fill="none" stroke="#333" stroke-width="3"/><path d="M19 3l3-1" stroke="#333"/></symbol>
<symbol id="lock" viewBox="0 0 24 24"><path d="M7 11V7a5 5 0 0 1 10 0v4" fill="none" stroke="#999" stroke-width="2.400"/><rect x="4" y="11" width="16" height="12" rx="1.500" fill="#5e5e5e"/></symbol>
<symbol id="crs" viewBox="0 0 24 24"><circle cx="12" cy="12" r="8" fill="#fff" stroke="#777"/><path d="M12 1l8 6H4zM4 12h16M4 17h16M4 7h16M12 3v18" stroke="#666" fill="#777"/><ellipse cx="12" cy="12" rx="4" ry="9" fill="none" stroke="#666"/></symbol>
<symbol id="msg" viewBox="0 0 24 24"><path d="M12 2c6 0 10 4 10 9s-4 9-9 9c-1 0-1 3-3 3s-1-3-3-4c-3-1-5-4-5-8 0-5 4-9 10-9z" fill="#5a5a5a"/><circle cx="7.500" cy="11" r="1.300" fill="#fff"/><circle cx="12" cy="11" r="1.300" fill="#fff"/><circle cx="16.500" cy="11" r="1.300" fill="#fff"/></symbol>
<symbol id="sr" viewBox="0 0 24 24"><circle cx="10" cy="10" r="7" fill="none" stroke="#888" stroke-width="1.800"/><path d="M15 15l7 7" stroke="#888" stroke-width="2"/></symbol>
</svg>

<header class="titlebar">
  <svg class="ticon"><use href="#q"/></svg>
  <span class="ttext">*Untitled Project - QGIS</span>
  <span class="wctl">
    <svg class="wb" viewBox="0 0 12 12"><path d="M0 6h12" stroke="#222"/></svg>
    <svg class="wb" viewBox="0 0 12 12"><path d="M.5 3.500h8v8h-8zM3 3V.5h8.500V9H9" fill="none" stroke="#222"/></svg>
    <svg class="wb" viewBox="0 0 12 12"><path d="M.5.5l11 11M11.500.5l-11 11" stroke="#222"/></svg>
  </span>
</header>
<nav class="menubar">
  <span>Project</span><span>Edit</span><span>View</span><span>Layer</span><span>Settings</span><span>Plugins</span><span>Vector</span><span>Raster</span><span>Database</span><span>Web</span><span>Mesh</span><span>Processing</span><span>MMQGIS</span><span>Help</span>
</nav>

<div class="tb">
  <div class="g first">
    <b class="t"><svg><use href="#new"/></svg></b><b class="t"><svg><use href="#open"/></svg></b><b class="t"><svg><use href="#save"/></svg></b><b class="t"><svg><use href="#saveas"/></svg></b><b class="t"><svg><use href="#layout"/></svg></b><b class="t"><svg><use href="#style"/></svg></b>
  </div>
  <div class="g">
    <b class="t on"><svg><use href="#hand"/></svg></b><b class="t"><svg><use href="#pan"/></svg></b><b class="t"><svg><use href="#zin"/></svg></b><b class="t"><svg><use href="#zout"/></svg></b><b class="t"><svg><use href="#zfull"/></svg></b><b class="t"><svg><use href="#zsel"/></svg></b><b class="t"><svg><use href="#zlay"/></svg></b><b class="t"><svg><use href="#z11"/></svg></b><b class="t"><svg><use href="#zlast"/></svg></b><b class="t"><svg><use href="#znext"/></svg></b><b class="t"><svg><use href="#mapn"/></svg></b><b class="t"><svg><use href="#map3"/></svg></b><b class="t"><svg><use href="#bmk"/></svg></b><b class="t"><svg><use href="#ref"/></svg></b>
  </div>
  <div class="g">
    <b class="t"><svg><use href="#idn"/></svg></b><b class="t"><svg><use href="#act"/></svg></b><i class="d off"></i><b class="t"><svg><use href="#sel"/></svg></b><i class="d"></i><b class="t"><svg><use href="#selby"/></svg></b><i class="d"></i><b class="t"><svg><use href="#desel"/></svg></b><b class="t"><svg><use href="#tbl"/></svg></b><b class="t"><svg><use href="#aba"/></svg></b><b class="t on"><svg><use href="#gear"/></svg></b><b class="t"><svg><use href="#sig"/></svg></b><b class="t"><svg><use href="#rul"/></svg></b><i class="d"></i><b class="t"><svg><use href="#tip"/></svg></b><b class="t"><svg><use href="#txt"/></svg></b><i class="d"></i>
  </div>
  <div class="g">
    <b class="t"><svg><use href="#hlp"/></svg></b>
  </div>
</div>

<div class="tb">
  <div class="g first">
    <b class="t"><svg><use href="#gpens"/></svg></b><b class="t"><svg><use href="#pen"/></svg></b><b class="t"><svg><use href="#gsave"/></svg></b><b class="t"><svg><use href="#gpts"/></svg></b><b class="t"><svg><use href="#gmod"/></svg></b><i class="d off"></i><b class="t"><svg><use href="#gedit"/></svg></b><b class="t"><svg><use href="#gtrash"/></svg></b><b class="t"><svg><use href="#gcut"/></svg></b><b class="t"><svg><use href="#gcopy"/></svg></b><b class="t"><svg><use href="#gpaste"/></svg></b><b class="t"><svg><use href="#gund"/></svg></b><b class="t"><svg><use href="#gred"/></svg></b>
  </div>
  <div class="g">
    <b class="t"><svg><use href="#labc"/></svg></b><b class="t"><svg><use href="#chart"/></svg></b><b class="t"><svg><use href="#labp"/></svg></b><b class="t"><svg><use href="#gl1"/></svg></b><b class="t"><svg><use href="#gl2"/></svg></b><b class="t"><svg><use href="#gl3"/></svg></b><b class="t"><svg><use href="#gl4"/></svg></b><b class="t"><svg><use href="#gl5"/></svg></b>
  </div>
  <div class="g">
    <b class="t"><svg><use href="#earth"/></svg></b>
  </div>
  <div class="g">
    <b class="t"><svg><use href="#py"/></svg></b><b class="t"><svg><use href="#ham"/></svg></b><b class="t"><svg><use href="#plg"/></svg></b><b class="t"><svg><use href="#undb"/></svg></b><i class="d"></i>
  </div>
</div>

<div class="tb">
  <div class="g first">
    <b class="t"><svg><use href="#grul"/></svg></b><b class="t"><svg><use href="#gpt2"/></svg></b><i class="d off"></i><b class="t"><svg><use href="#gbr"/></svg></b><b class="t"><svg><use href="#ghex"/></svg></b><b class="t"><svg><use href="#gring"/></svg></b><b class="t"><svg><use href="#gtw"/></svg></b><b class="t"><svg><use href="#gring"/></svg></b><b class="t"><svg><use href="#grx"/></svg></b><b class="t"><svg><use href="#gtx"/></svg></b><b class="t"><svg><use href="#gb2"/></svg></b><b class="t"><svg><use href="#goff"/></svg></b><b class="t"><svg><use href="#gvr"/></svg></b><b class="t"><svg><use href="#gsp"/></svg></b><b class="t"><svg><use href="#gsc"/></svg></b><b class="t"><svg><use href="#gsc"/></svg></b><b class="t"><svg><use href="#gsl"/></svg></b><b class="t"><svg><use href="#gcr"/></svg></b><b class="t"><svg><use href="#grot"/></svg></b><i class="d off"></i>
  </div>
  <div class="g">
    <b class="t"><svg><use href="#mag"/></svg></b><b class="t"><svg><use href="#gsn"/></svg></b><b class="t"><svg><use href="#gsn2"/></svg></b>
    <span class="spin dis"><span>12</span><span class="ar"><u class="up"></u><u class="dn"></u></span></span>
    <span class="pxcombo"><span>px</span><svg class="chev" viewBox="0 0 12 8"><path d="M1 1.500l5 5 5-5" fill="none" stroke="#a0a0a0"/></svg></span>
    <b class="t"><svg><use href="#trim"/></svg></b><b class="t"><svg><use href="#gcross"/></svg></b><b class="t"><svg><use href="#gcross2"/></svg></b><i class="d off"></i>
  </div>
</div>

<div class="tb">
  <div class="g first">
    <b class="t"><svg><use href="#gv1"/></svg></b><i class="d off"></i><b class="t"><svg><use href="#gv2"/></svg></b><i class="d off"></i><b class="t"><svg><use href="#gv3"/></svg></b><i class="d off"></i><b class="t"><svg><use href="#gv4"/></svg></b><i class="d off"></i><b class="t"><svg><use href="#gv5"/></svg></b><i class="d off"></i>
  </div>
  <div class="g">
    <b class="t"><svg><use href="#gm1"/></svg></b><i class="d off"></i><b class="t"><svg><use href="#gm2"/></svg></b><b class="t"><svg><use href="#gm3"/></svg></b><b class="t"><svg><use href="#gm4"/></svg></b><b class="t"><svg><use href="#gm5"/></svg></b><b class="t"><svg><use href="#gm6"/></svg></b><b class="t"><svg><use href="#gm7"/></svg></b><b class="t"><svg><use href="#gm8"/></svg></b><i class="d off"></i><b class="t"><svg><use href="#gm9"/></svg></b><i class="d off"></i><b class="t"><svg><use href="#gm10"/></svg></b><b class="t"><svg><use href="#gm11"/></svg></b><i class="d off"></i><b class="t"><svg><use href="#gc1"/></svg></b><b class="t"><svg><use href="#gc1"/></svg></b><b class="t"><svg><use href="#gc1"/></svg></b><b class="t"><svg><use href="#gmv"/></svg></b>
  </div>
</div>

<main class="main">
  <aside class="lefttools">
    <svg class="lt"><use href="#lyr"/></svg>
    <svg class="lt"><use href="#gpk"/></svg>
    <svg class="lt"><use href="#lv"/></svg>
    <svg class="lt"><use href="#sl"/></svg>
    <svg class="lt"><use href="#lraw"/></svg>
    <hr class="ltsep">
    <svg class="lt"><use href="#lmesh"/></svg>
    <hr class="ltsep wide">
    <svg class="lt"><use href="#ltop"/></svg>
  </aside>

  <section class="dock leftdock">
    <div class="dtitle"><span>Browser</span><svg class="dbtn"><path d="M6 1h10v10h-3M1 6h10v10H1z" fill="none" stroke="#333" stroke-width="2.400"/></svg><svg class="dbtn cl"><path d="M2 2l12 12M14 2L2 14" stroke="#333" stroke-width="3.400"/></svg></div>
    <div class="smtb browsertb">
      <svg class="sm"><use href="#lpt"/></svg><svg class="sm"><use href="#ref"/></svg><svg class="sm"><use href="#fun"/></svg><svg class="sm"><use href="#tup"/></svg><svg class="sm"><use href="#inf"/></svg>
    </div>
    <div class="tree browser">
      <div class="list">
        <div class="row"><svg class="ch"><path d="M1 4l5 5 5-5" fill="none" stroke="#444" stroke-width="1.500"/></svg><svg class="ri"><use href="#star"/></svg><span>Favorites</span></div>
        <div class="row l2"><svg class="ch"><path d="M4 1l5 5-5 5" fill="none" stroke="#999" stroke-width="1.500"/></svg><svg class="ri"><use href="#f"/></svg><span>D:\Škola\Články\2019 - Respo</span></div>
        <div class="row"><svg class="ch"><path d="M4 1l5 5-5 5" fill="none" stroke="#999" stroke-width="1.500"/></svg><svg class="ri"><use href="#fh"/></svg><span>Home</span></div>
        <div class="row"><svg class="ch"><path d="M4 1l5 5-5 5" fill="none" stroke="#999" stroke-width="1.500"/></svg><svg class="ri"><use href="#f"/></svg><span>C:\</span></div>
        <div class="row"><svg class="ch"><path d="M4 1l5 5-5 5" fill="none" stroke="#999" stroke-width="1.500"/></svg><svg class="ri"><use href="#f"/></svg><span>D:\</span></div>
        <div class="row"><svg class="ch"><path d="M4 1l5 5-5 5" fill="none" stroke="#999" stroke-width="1.500"/></svg><svg class="ri"><use href="#f"/></svg><span>E:\</span></div>
        <div class="row"><svg class="ch"><path d="M4 1l5 5-5 5" fill="none" stroke="#999" stroke-width="1.500"/></svg><svg class="ri"><use href="#f"/></svg><span>F:\</span></div>
        <div class="row"><svg class="ch"></svg><svg class="ri"><use href="#gpk"/></svg><span>GeoPackage</span></div>
        <div class="row"><svg class="ch"></svg><svg class="ri"><use href="#sl"/></svg><span>SpatiaLite</span></div>
        <div class="row"><svg class="ch"><path d="M4 1l5 5-5 5" fill="none" stroke="#999" stroke-width="1.500"/></svg><svg class="ri"><use href="#pg"/></svg><span>PostGIS</span></div>
        <div class="row"><svg class="ch"></svg><svg class="ri"><use href="#ms"/></svg><span>MSSQL</span></div>
        <div class="row"><svg class="ch"></svg><svg class="ri"><use href="#db2"/></svg><span>DB2</span></div>
        <div class="row"><svg class="ch"></svg><svg class="ri"><use href="#globe"/></svg><span>WMS/WMTS</span></div>
        <div class="row"><svg class="ch"><path d="M1 4l5 5 5-5" fill="none" stroke="#444" stroke-width="1.500"/></svg><svg class="ri"><use href="#globe"/></svg><span>XYZ Tiles</span></div>
        <div class="row l2"><svg class="ch"></svg><svg class="ri"><use href="#osm"/></svg><span>OpenStreetMap</span></div>
        <div class="row"><svg class="ch"></svg><svg class="ri"><use href="#wcs"/></svg><span>WCS</span></div>
        <div class="row"><svg class="ch"></svg><svg class="ri"><use href="#wfs"/></svg><span>WFS</span></div>
        <div class="row"><svg class="ch"></svg><svg class="ri"><use href="#ows"/></svg><span>OWS</span></div>
        <div class="row"><svg class="ch"><path d="M4 1l5 5-5 5" fill="none" stroke="#999" stroke-width="1.500"/></svg><svg class="ri"><use href="#globe"/></svg><span>ArcGisMapServer</span></div>
        <div class="row"><svg class="ch"></svg><svg class="ri"><use href="#ows"/></svg></div>
      </div>
      <div class="sb">
        <svg class="sba" viewBox="0 0 20 16"><path d="M5 10l5-5 5 5" fill="none" stroke="#555" stroke-width="1.500"/></svg>
        <div class="thumb th1"></div><div class="rest"></div>
        <svg class="sba" viewBox="0 0 20 16"><path d="M5 6l5 5 5-5" fill="none" stroke="#555" stroke-width="1.500"/></svg>
      </div>
    </div>
    <div class="dtitle layers"><span>Layers</span><svg class="dbtn"><path d="M6 1h10v10h-3M1 6h10v10H1z" fill="none" stroke="#333" stroke-width="2.400"/></svg><svg class="dbtn cl"><path d="M2 2l12 12M14 2L2 14" stroke="#333" stroke-width="3.400"/></svg></div>
    <div class="smtb layerstb">
      <svg class="sm"><use href="#brush"/></svg><svg class="sm"><use href="#addg"/></svg><svg class="sm"><use href="#eye"/></svg><svg class="sm"><use href="#fun"/></svg><svg class="sm"><use href="#eps"/></svg><i class="d narrow"></i><svg class="sm"><use href="#tdn"/></svg><svg class="sm"><use href="#tup"/></svg><svg class="sm"><use href="#rem"/></svg>
    </div>
    <div class="tree layerlist">
      <div class="lrow"><span class="cb"><svg viewBox="0 0 14 14"><path d="M2.500 7l3 3.500 6-7" fill="none" stroke="#333"/></svg></span><span class="dot"></span><span class="lname">ruian</span></div>
    </div>
  </section>

  <section class="map"><canvas id="mapc" width="1074" height="805"></canvas></section>

  <section class="dock rightdock">
    <div class="dtitle"><span>Results Viewer</span><svg class="dbtn"><path d="M6 1h10v10h-3M1 6h10v10H1z" fill="none" stroke="#333" stroke-width="2.400"/></svg><svg class="dbtn cl"><path d="M2 2l12 12M14 2L2 14" stroke="#333" stroke-width="3.400"/></svg></div>
    <div class="results">
      <div class="rrow"><svg class="ri"><use href="#rl"/></svg><span>R Plots [01:51:38PM]</span></div>
    </div>
    <div class="rtext">
      <div><b>Algorithm:</b> R Plots</div>
      <div><b>File path:</b> <a class="lnk" href="#">C:</a></div>
      <div class="full"><a class="lnk" href="#">\Users\Caha\AppData\Local\Temp\processing_9c2c6324e679424b80f989bd362</a></div>
      <div><a class="lnk" href="#">1c6f1\bce2a43450034ad2a41cd9c3f0c9b9a0\RPLOTS.html</a></div>
    </div>
    <div class="redbox"></div>
    <div class="dtitle toolbox"><span>Processing Toolbox</span><svg class="dbtn"><path d="M6 1h10v10h-3M1 6h10v10H1z" fill="none" stroke="#333" stroke-width="2.400"/></svg><svg class="dbtn cl"><path d="M2 2l12 12M14 2L2 14" stroke="#333" stroke-width="3.400"/></svg></div>
    <div class="smtb ptb">
      <svg class="sm"><use href="#pa1"/></svg><svg class="sm"><use href="#pa2"/></svg><svg class="sm"><use href="#clock"/></svg><span class="smon"><svg class="sm"><use href="#doc"/></svg></span><span class="smsep"></span><svg class="sm"><use href="#yed"/></svg><span class="smsep"></span><svg class="sm"><use href="#wr"/></svg>
    </div>
    <div class="search"><svg class="srico"><use href="#sr"/></svg><span>Search...</span></div>
    <div class="tree toolboxlist">
      <div class="list">
        <div class="row"><svg class="ch"><path d="M4 1l5 5-5 5" fill="none" stroke="#999" stroke-width="1.500"/></svg><svg class="ri"><use href="#clock"/></svg><span>Recently used</span></div>
        <div class="row"><svg class="ch"><path d="M4 1l5 5-5 5" fill="none" stroke="#999" stroke-width="1.500"/></svg><svg class="ri"><use href="#q"/></svg><span>Cartography</span></div>
        <div class="row"><svg class="ch"><path d="M4 1l5 5-5 5" fill="none" stroke="#999" stroke-width="1.500"/></svg><svg class="ri"><use href="#q"/></svg><span>Database</span></div>
        <div class="row"><svg class="ch"><path d="M4 1l5 5-5 5" fill="none" stroke="#999" stroke-width="1.500"/></svg><svg class="ri"><use href="#q"/></svg><span>File tools</span></div>
        <div class="row"><svg class="ch"><path d="M4 1l5 5-5 5" fill="none" stroke="#999" stroke-width="1.500"/></svg><svg class="ri"><use href="#q"/></svg><span>Graphics</span></div>
        <div class="row"><svg class="ch"><path d="M4 1l5 5-5 5" fill="none" stroke="#999" stroke-width="1.500"/></svg><svg class="ri"><use href="#q"/></svg><span>Interpolation</span></div>
        <div class="row"><svg class="ch"><path d="M4 1l5 5-5 5" fill="none" stroke="#999" stroke-width="1.500"/></svg><svg class="ri"><use href="#q"/></svg><span>Layer tools</span></div>
        <div class="row"><svg class="ch"><path d="M4 1l5 5-5 5" fill="none" stroke="#999" stroke-width="1.500"/></svg><svg class="ri"><use href="#q"/></svg><span>Network analysis</span></div>
        <div class="row"><svg class="ch"><path d="M4 1l5 5-5 5" fill="none" stroke="#999" stroke-width="1.500"/></svg><svg class="ri"><use href="#q"/></svg><span>Raster analysis</span></div>
        <div class="row"><svg class="ch"><path d="M4 1l5 5-5 5" fill="none" stroke="#999" stroke-width="1.500"/></svg><svg class="ri"><use href="#q"/></svg><span>Raster terrain analysis</span></div>
        <div class="row"><svg class="ch"><path d="M4 1l5 5-5 5" fill="none" stroke="#999" stroke-width="1.500"/></svg><svg class="ri"><use href="#q"/></svg><span>Raster tools</span></div>
        <div class="row"><svg class="ch"><path d="M4 1l5 5-5 5" fill="none" stroke="#999" stroke-width="1.500"/></svg><svg class="ri"><use href="#q"/></svg><span>Vector analysis</span></div>
        <div class="row"><svg class="ch"><path d="M4 1l5 5-5 5" fill="none" stroke="#999" stroke-width="1.500"/></svg><svg class="ri"><use href="#q"/></svg><span>Vector creation</span></div>
        <div class="row"><svg class="ch"><path d="M4 1l5 5-5 5" fill="none" stroke="#999" stroke-width="1.500"/></svg><svg class="ri"><use href="#q"/></svg><span>Vector general</span></div>
        <div class="row"><svg class="ch"><path d="M4 1l5 5-5 5" fill="none" stroke="#999" stroke-width="1.500"/></svg><svg class="ri"><use href="#q"/></svg><span>Vector geometry</span></div>
        <div class="row"><svg class="ch"><path d="M4 1l5 5-5 5" fill="none" stroke="#999" stroke-width="1.500"/></svg><svg class="ri"><use href="#q"/></svg><span>Vector overlay</span></div>
        <div class="row"><svg class="ch"><path d="M4 1l5 5-5 5" fill="none" stroke="#999" stroke-width="1.500"/></svg><svg class="ri"><use href="#q"/></svg><span>Vector selection</span></div>
      </div>
      <div class="sb">
        <svg class="sba" viewBox="0 0 20 16"><path d="M5 10l5-5 5 5" fill="none" stroke="#555" stroke-width="1.500"/></svg>
        <div class="thumb th2"></div><div class="rest"></div>
        <svg class="sba" viewBox="0 0 20 16"><path d="M5 6l5 5 5-5" fill="none" stroke="#555" stroke-width="1.500"/></svg>
      </div>
    </div>
  </section>
</main>

<footer class="status">
  <div class="locator"><svg class="srico"><use href="#sr"/></svg><span>Type to locate (Ctrl+K)</span></div>
  <div class="sright">
    <span class="lab w-coord">Coordinate</span>
    <span class="inp w-cv">-579925,-816508</span>
    <svg class="sti"><use href="#cog"/></svg>
    <span class="lab w-scale">Scale</span>
    <span class="inp w-sv">1:3921952<svg class="chev" viewBox="0 0 12 8"><path d="M1 1.500l5 5 5-5" fill="none" stroke="#555"/></svg></span>
    <svg class="sti lk"><use href="#lock"/></svg>
    <span class="lab w-mag">Magnifier</span>
    <span class="spin w-mv"><span>100%</span><span class="ar"><u class="up"></u><u class="dn"></u></span></span>
    <span class="lab w-rot">Rotation</span>
    <span class="spin w-rv"><span>0,0 °</span><span class="ar"><u class="up"></u><u class="dn"></u></span></span>
    <span class="cb stcb"><svg viewBox="0 0 14 14"><path d="M2.500 7l3 3.500 6-7" fill="none" stroke="#333"/></svg></span>
    <span class="lab w-ren">Render</span>
    <svg class="sti glb"><use href="#crs"/></svg>
    <span class="lab w-usr">USER:100000</span>
    <svg class="sti ms"><use href="#msg"/></svg>
  </div>
</footer>
<script src="map.js"></script>
</body>
</html>
```
FILE: styles.css
```css
* { box-sizing: border-box; }
html, body { margin: 0; padding: 0; }
body {
  width: 1920px; height: 1030px; overflow: hidden;
  display: flex; flex-direction: column;
  background: #f0f0f0; color: #111;
  font: 14.1px/20px "Open Sans", "Noto Sans", sans-serif;
}
.defs { display: block; height: 0; width: 0; }
.ic { font: 11px "Liberation Sans"; fill: #444; }
.ig { font: bold 8px "Liberation Sans"; fill: #c4c4c4; }
.ig2 { font: bold 7px "Liberation Sans"; fill: #bbb; }
.ii { font: bold italic 14px "Liberation Serif"; fill: #fff; }
.ii2 { font: bold italic 18px "Liberation Serif"; fill: #fff; }
.il { font: bold 8px "Liberation Sans"; fill: #333; }
.it { font: 16px "Liberation Serif"; fill: #333; }
.iq { font: bold 14px "Liberation Serif"; fill: #fff; }
.id { font: bold 7.500px "Liberation Sans"; fill: #fff; }
.ie { font: 18px "Liberation Serif"; fill: #8a4a8a; }
.ir { font: bold 17px "Liberation Sans"; fill: #2f78c4; }

.titlebar { height: 30px; background: #fff; display: flex; align-items: center; padding-left: 2px; flex: none; }
.ticon { width: 20px; height: 20px; margin-right: 5px; }
.ttext { font-size: 14.2px; }
.wctl { margin-left: auto; display: flex; align-items: center; gap: 46px; padding-right: 26px; }
.wb { width: 12px; height: 12px; }

.menubar { height: 24px; background: #fff; display: flex; align-items: center; padding-left: 8px; gap: 15.7px; flex: none; font-size: 14.1px; }

.tb { height: 34.300px; flex: none; display: flex; align-items: center; border-bottom: 1px solid #c8c8c8; background: #f0f0f0; padding-top: 1px; }
.g {
  display: flex; align-items: center; height: 100%;
  margin-left: 3px; padding-left: 10px; border-left: 1px solid #c8c8c8;
  background: repeating-linear-gradient(#a8a8a8 0 1px, transparent 1px 3px) 4px 8px / 1px 18px no-repeat;
}
.g.first { margin-left: 0; border-left: 0; padding-left: 11px; }
.t { width: 31px; height: 31px; flex: none; display: flex; align-items: center; justify-content: center; font-weight: normal; }
.t svg { width: 24px; height: 24px; }
.t.on { background: #cde4f7; outline: 1px solid #92c4ee; outline-offset: -1px; }
.d { width: 14.5px; height: 10px; flex: none; display: block; background: linear-gradient(#000, #000) no-repeat; clip-path: polygon(3px 2px, 12px 2px, 7.500px 8px); }
.d.off { background: #777; }
.d.narrow { width: 14px; }

.spin { display: flex; align-items: center; justify-content: space-between; background: #fff; border: 1px solid #a8a8a8; height: 22px; font-size: 12.5px; padding-left: 2px; }
.spin.dis { width: 86px; margin-left: 1px; background: #efefef; border-color: #cfcfcf; color: #666; }
.ar { display: flex; flex-direction: column; width: 13px; height: 100%; gap: 3px; justify-content: center; align-items: center; background: #eee; }
.ar u { display: block; width: 8px; height: 5px; background: #222; }
.ar .up { clip-path: polygon(50% 0, 100% 100%, 0 100%); }
.ar .dn { clip-path: polygon(0 0, 100% 0, 50% 100%); }
.pxcombo { width: 70px; height: 26px; background: #c6c6c6; color: #777; display: flex; align-items: center; justify-content: space-between; padding: 0 7px 0 5px; font-size: 14px; }
.chev { width: 12px; height: 8px; }

.main { flex: 1; min-height: 0; display: flex; position: relative; }
.lefttools { width: 35px; flex: none; display: flex; flex-direction: column; align-items: center; padding: 14px 1px 0 0; gap: 6px; background: #f0f0f0; }
.lt { width: 24px; height: 24px; flex: none; }
.ltsep { width: 26px; height: 1px; margin: 1px 0 0; border: 0; background: #c8c8c8; flex: none; }
.ltsep.wide { width: 35px; margin: 0 0 4px; }

.dock { display: flex; flex-direction: column; flex: none; padding-top: 2px; position: relative; }
.leftdock { width: 333px; }
.rightdock { width: 465px; margin-left: 5px; }
.dtitle { height: 29px; flex: none; background: #d9d9d9; border: 1px solid #bdbdbd; display: flex; align-items: center; padding-left: 5px; gap: 9px; }
.dtitle span { flex: 1; }
.dbtn { width: 17px; height: 17px; flex: none; }
.dbtn.cl { width: 16px; height: 16px; margin-right: 5px; }
.dtitle.layers { margin-top: 6px; height: 31px; }
.dtitle.toolbox { height: 27px; }

.smtb { display: flex; align-items: center; flex: none; }
.sm { width: 18px; height: 18px; flex: none; margin-right: 5px; }
.browsertb { height: 29px; padding-left: 4px; }
.layerstb { height: 29px; padding-left: 4px; }
.layerstb .d.narrow { margin: 0 0 0 -2px; }
.ptb { height: 29px; padding-left: 4px; }
.smon { width: 23px; height: 21px; background: #cde4f7; outline: 1px solid #92c4ee; outline-offset: -1px; display: flex; align-items: center; justify-content: center; margin-right: 3px; }
.smon .sm { margin: 0; }
.smsep { width: 1px; height: 18px; background: #c8c8c8; margin: 0 6px 0 0; }

.tree { background: #fff; border: 1px solid #8f8f8f; display: flex; min-height: 0; }
.tree.browser { height: 465px; }
.tree.layerlist { flex: 1; display: block; }
.tree.toolboxlist { flex: 1; }
.list { flex: 1; overflow: hidden; padding-top: 1px; }
.row { height: 24px; display: flex; align-items: center; padding-left: 6px; white-space: nowrap; }
.row.l2 { padding-left: 31px; }
.ch { width: 12px; height: 12px; flex: none; margin-right: 7px; }
.ri { width: 24px; height: 24px; flex: none; margin-right: 5px; padding: 1px; }
.sb { width: 20px; flex: none; display: flex; flex-direction: column; background: #f0f0f0; }
.sba { width: 20px; height: 20px; flex: none; }
.thumb { background: #c8c8c8; width: 19px; }
.th1 { height: 380px; margin-top: 2px; }
.th2 { height: 220px; }
.rest { flex: 1; }

.lrow { height: 24px; margin-left: 25px; background: #d9d9d9; display: flex; align-items: center; }
.cb { width: 16px; height: 16px; background: #fff; border: 1px solid #444; flex: none; display: block; }
.cb svg { display: block; width: 14px; height: 14px; }
.lrow .cb { margin-left: 3px; }
.dot { width: 11px; height: 11px; border-radius: 50%; background: #b39352; border: 1px solid #8b7a55; margin-left: 10px; flex: none; }
.lname { font-weight: 700; text-decoration: underline; margin-left: 11px; color: #000; }

.map { width: 1077px; margin-left: 5px; flex: none; background: #fff; border: 1px solid #8f8f8f; overflow: hidden; margin-top: 1px; }
.map canvas { display: block; }

.results { background: #fff; border: 1px solid #8f8f8f; border-bottom: 0; margin-top: 3px; height: 190px; flex: none; }
.rrow { height: 25px; background: #d9d9d9; display: flex; align-items: center; padding-left: 1px; }
.rtext { height: 95px; flex: none; background: #fff; border-bottom: 2px solid #3b7fc4; margin-bottom: 9px; font-size: 12.3px; line-height: 16px; padding: 13px 0 0 5px; overflow: hidden; color: #111; }
.rtext > div { white-space: nowrap; height: 16px; }
.rtext .full { width: 449px; overflow: hidden; }
.lnk { color: #1a1ae0; text-decoration: underline; outline: 1px dotted #000; outline-offset: -1px; display: inline-block; height: 16px; }
.redbox { position: absolute; left: -8px; right: 0; top: 223px; height: 106px; border: 11px solid #ff0000; border-radius: 7px; pointer-events: none; }
.search { height: 22px; flex: none; background: #fff; border: 1px solid #8f8f8f; display: flex; align-items: center; color: #777; padding-left: 7px; font-size: 12.500px; }
.srico { width: 15px; height: 15px; margin-right: 7px; flex: none; }
.toolboxlist { border-top: 2px solid #8f8f8f; }
.toolboxlist .list { padding-top: 0; }

.status { height: 32px; flex: none; display: flex; align-items: center; font-size: 12.2px; padding-left: 4px; background: #f0f0f0; }
.locator { width: 234px; height: 22px; background: #fff; border: 1px solid #8f8f8f; display: flex; align-items: center; padding-left: 7px; color: #777; font-size: 13px; }
.sright { margin-left: auto; display: flex; align-items: center; }
.lab { flex: none; white-space: nowrap; }
.inp { background: #fff; border: 1px solid #a8a8a8; height: 22px; display: flex; align-items: center; justify-content: center; flex: none; }
.w-coord { width: 64px; }
.w-cv { width: 128px; }
.sti { width: 22px; height: 22px; flex: none; }
.w-scale { width: 34px; margin-left: 13px; }
.w-sv { width: 91px; justify-content: space-between; padding: 0 7px 0 2px; }
.lk { margin-left: 8px; margin-right: 5px; }
.w-mag { width: 56px; }
.w-mv { width: 86px; flex: none; }
.w-rot { width: 47px; margin-left: 10px; }
.w-rv { width: 85px; margin-left: 9px; flex: none; }
.stcb { margin-left: 7px; }
.w-ren { width: 40px; margin-left: 6px; }
.glb { margin-left: 16px; margin-right: 2px; }
.w-usr { width: 78px; }
.ms { margin: 0 4px 0 21px; }
```
FILE: map.js
```js
(function () {
  var c = document.getElementById('mapc').getContext('2d');
  var raw = [[30,260],[120,235],[240,210],[330,160],[450,125],[530,100],[540,40],[620,80],[640,130],[700,75],[770,110],[740,150],[870,210],[930,255],[1000,270],[1000,310],[960,360],[1000,400],[1040,470],[1090,440],[1120,430],[1085,375],[1110,355],[1200,420],[1240,440],[1285,435],[1290,480],[1270,520],[1330,545],[1400,590],[1460,610],[1470,670],[1510,710],[1520,780],[1480,800],[1420,810],[1340,860],[1320,960],[1180,1040],[1060,1080],[1000,1050],[900,1020],[820,1000],[780,970],[700,900],[660,915],[620,890],[610,980],[530,1040],[430,1040],[380,1000],[350,930],[300,870],[240,820],[200,770],[130,670],[100,610],[70,480],[110,430],[40,320]];
  var toX = function (x) { return 640 + x / 2.613 - 374; };
  var toY = function (y) { return 410 + y / 3 - 192; };
  var poly = raw.map(function (p) { return [toX(p[0]), toY(p[1])]; });
  var holes = [[250, 310], [395, 912], [1215, 690]].map(function (p) { return [toX(p[0]), toY(p[1])]; });
  function inside(x, y) {
    var r = false;
    for (var i = 0, j = poly.length - 1; i < poly.length; j = i++) {
      var a = poly[i], b = poly[j];
      if ((a[1] > y) !== (b[1] > y) && x < (b[0] - a[0]) * (y - a[1]) / (b[1] - a[1]) + a[0]) r = !r;
    }
    return r;
  }
  var s = 12345;
  function rnd() { s = (s * 1664525 + 1013904223) >>> 0; return s / 4294967296; }
  c.fillStyle = '#ff9e1b';
  c.strokeStyle = '#2f2612';
  c.lineWidth = 1.3;
  var n = 0, tries = 0;
  while (n < 9500 && tries < 120000) {
    tries++;
    var x = 255 + rnd() * 600, y = 215 + rnd() * 370;
    if (!inside(x, y)) continue;
    var skip = false;
    holes.forEach(function (h) { if (Math.hypot(x - h[0], y - h[1]) < 6) skip = true; });
    if (skip) continue;
    c.beginPath();
    c.arc(x, y, 4, 0, Math.PI * 2);
    c.fill();
    c.stroke();
    n++;
  }
})();
```
